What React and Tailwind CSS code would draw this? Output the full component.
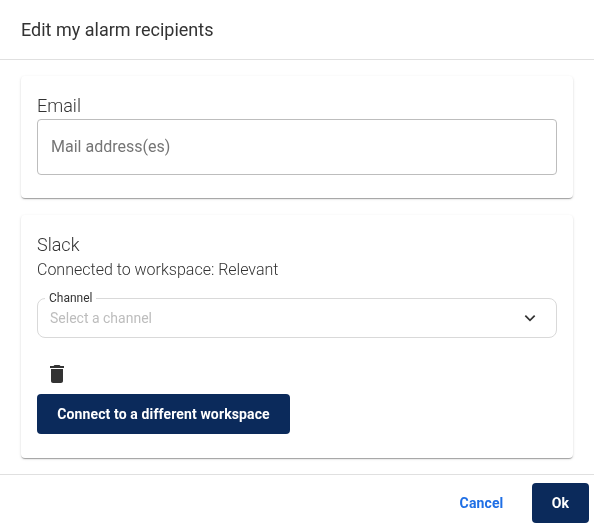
import React from "react";

function Card({ className, children }) {
  return (
    <div className={`mx-[21px] rounded bg-white px-4 shadow-[0_2px_1px_-1px_rgba(0,0,0,0.2),0_1px_1px_0_rgba(0,0,0,0.14),0_1px_3px_0_rgba(0,0,0,0.12)] ${className}`}>
      {children}
    </div>
  );
}

export default function App() {
  return (
    <div className="flex h-[527px] w-[594px] will-change-transform flex-col overflow-hidden bg-white font-['Roboto',sans-serif] text-[#333333]">
      <header className="flex h-[60px] shrink-0 items-center border-b border-[#e0e0e0] pl-[21px] text-lg">
        Edit my alarm recipients
      </header>

      <main className="flex flex-1 flex-col gap-[17px] pt-4">
        <Card className="h-[122px] pt-[18px]">
          <div className="text-lg leading-[24px] font-light">Email</div>
          <div className="mt-[1px] flex h-[56px] items-center rounded border border-[#bdbdbd] px-[13px] text-base text-[#757575]">
            Mail address(es)
          </div>
        </Card>

        <Card className="h-[243px] pt-[18px]">
          <div className="text-lg leading-[24px] font-light">Slack</div>
          <div className="mt-[1px] text-base leading-[24px] font-light">Connected to workspace: Relevant</div>
          <div className="relative mt-[16px] flex h-[40px] items-center justify-between rounded-lg border border-[#d9d9d9] pr-[19px] pl-[12px] text-sm text-[#bdbdbd]">
            <span className="absolute -top-[8px] left-[7px] bg-white px-1 text-xs leading-[14px] text-[#333333]">Channel</span>
            <span>Select a channel</span>
            <svg width="14" height="14" viewBox="0 0 24 24" fill="none" stroke="#333333" strokeWidth="3" aria-hidden="true">
              <path d="M4 8l8 8 8-8" />
            </svg>
          </div>
          <div className="mt-[24px] ml-[8px] h-[24px]">
            <svg width="24" height="24" viewBox="0 0 24 24" fill="#333333" aria-hidden="true">
              <path d="M6 19c0 1.1.9 2 2 2h8c1.1 0 2-.9 2-2V7H6v12zM19 4h-3.5l-1-1h-5l-1 1H5v2h14V4z" />
            </svg>
          </div>
          <button className="mt-[8px] h-[40px] w-[253px] rounded bg-[#0b2a5b] text-sm font-bold tracking-[0.125px] text-white">
            Connect to a different workspace
          </button>
        </Card>
      </main>

      <footer className="flex h-[53px] shrink-0 items-center justify-end gap-[20px] border-t border-[#e0e0e0] pt-[4px] pr-[5px]">
        <button className="h-[40px] w-[61px] text-sm font-bold tracking-[0.125px] text-[#1f6fe5]">Cancel</button>
        <button className="h-[40px] w-[57px] rounded bg-[#0b2a5b] text-sm font-bold tracking-[0.125px] text-white">Ok</button>
      </footer>
    </div>
  );
}
